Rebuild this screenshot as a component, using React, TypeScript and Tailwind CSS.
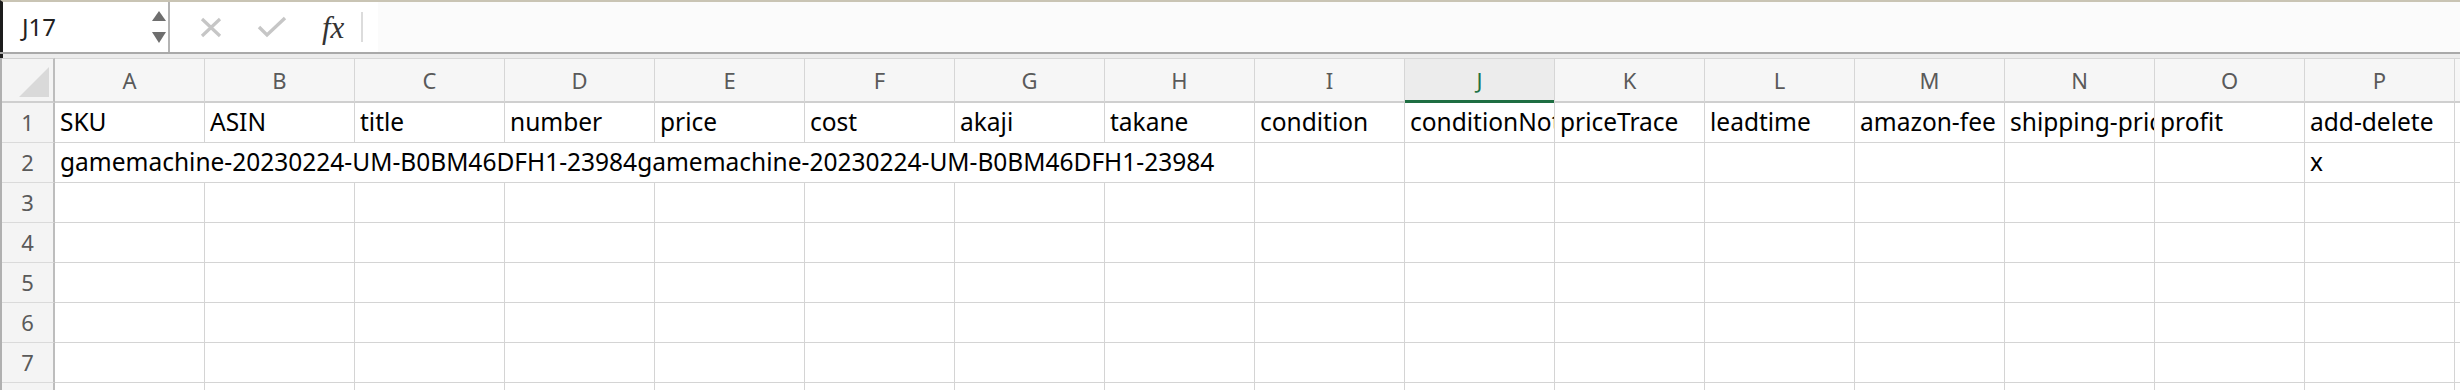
const COLS = ['A', 'B', 'C', 'D', 'E', 'F', 'G', 'H', 'I', 'J', 'K', 'L', 'M', 'N', 'O', 'P', 'Q'];

const HEAD = [
  'SKU', 'ASIN', 'title', 'number', 'price', 'cost', 'akaji', 'takane', 'condition',
  'conditionNote', 'priceTrace', 'leadtime', 'amazon-fee', 'shipping-price', 'profit', 'add-delete', '',
];

const SKU = 'gamemachine-20230224-UM-B0BM46DFH1-23984';

const font = { fontFamily: '"Noto Sans", "Noto Sans CJK JP", sans-serif' };

const FormulaBar = () => (
  <div className="flex h-[52px] border-t-2 border-[#c9c4b4] border-l-[3px] border-l-[#1c1c1c] bg-white">
    {/* Name box */}
    <div className="flex w-[167px] items-center justify-between border-r-2 border-[#b4b4b4] pl-[19px] pr-[2px]">
      <span className="text-[24px] text-[#222]">J17</span>
      <div className="flex h-full flex-col justify-between py-[9px]">
        <svg width="14" height="10" viewBox="0 0 14 10">
          <polygon points="7,0 14,10 0,10" fill="#6e6e6e" />
        </svg>
        <svg width="14" height="11" viewBox="0 0 14 11">
          <polygon points="0,0 14,0 7,11" fill="#6e6e6e" />
        </svg>
      </div>
    </div>

    {/* Cancel / enter / fx */}
    <div className="flex w-[208px] items-center">
      <svg className="ml-[30px]" width="22" height="21" viewBox="0 0 22 21">
        <path d="M2 2 L20 19 M20 2 L2 19" stroke="#c6c6c6" strokeWidth="3.2" strokeLinecap="butt" />
      </svg>
      <svg className="ml-[35px]" width="30" height="22" viewBox="0 0 30 22">
        <path d="M2 11 L10 19 L28 2" stroke="#c6c6c6" strokeWidth="3.4" fill="none" />
      </svg>
      <span
        className="ml-[35px] text-[31px] italic leading-none text-[#333]"
        style={{ fontFamily: '"Liberation Serif", "DejaVu Serif", serif' }}
      >
        fx
      </span>
      <div className="ml-[17px] h-[30px] w-[2px] bg-[#dcdcdc]" />
    </div>

    {/* Formula input */}
    <div className="flex-1 bg-[#fbfbfb]" />
  </div>
);

const App = () => {
  return (
    <div className="h-[390px] w-full overflow-hidden bg-white text-black" style={font}>
      <FormulaBar />
      <div className="h-[2px] bg-[#a9a9a9]" />
      <div className="h-[4px] border-l-[3px] border-[#1c1c1c] bg-[#ececec]" />

      <div className="grid w-[2603px] grid-cols-[53px_repeat(17,150px)] border-l-2 border-[#b0b0b0]">
        {/* Column headers */}
        <div className="relative h-[45px] border-t border-b-2 border-r-2 border-[#cfcfcf] border-r-[#bdbdbd] bg-[#f4f4f4]">
          <svg className="absolute right-[4px] bottom-[4px]" width="30" height="30" viewBox="0 0 30 30">
            <polygon points="30,0 30,30 0,30" fill="#d9d9d9" />
          </svg>
        </div>
        {COLS.map((c) => (
          <div
            key={c}
            className={`relative flex h-[45px] items-center justify-center border-t border-r border-b-2 border-[#d6d6d6] border-b-[#cfcfcf] text-[22px] ${
              c === 'J' ? 'bg-[#ececec] text-[#217346]' : 'bg-[#f6f6f6] text-[#5a5a5a]'
            }`}
          >
            {c}
            {c === 'J' && <div className="absolute left-0 right-0 -bottom-[2px] h-[3px] bg-[#1e6e42]" />}
          </div>
        ))}

        {/* Row 1 */}
        <div className="flex h-[40px] items-center justify-center border-r-2 border-b border-[#dadada] border-r-[#bdbdbd] bg-[#f4f4f4] text-[22px] text-[#5a5a5a]">
          1
        </div>
        {HEAD.map((h, i) => (
          <div
            key={i}
            className="flex h-[40px] items-center overflow-hidden whitespace-nowrap border-r border-b border-[#d4d4d4] pl-[5px] text-[24.5px]"
          >
            {h}
          </div>
        ))}

        {/* Row 2 */}
        <div className="flex h-[40px] items-center justify-center border-r-2 border-b border-[#dadada] border-r-[#bdbdbd] bg-[#f4f4f4] text-[22px] text-[#5a5a5a]">
          2
        </div>
        <div className="col-span-8 flex h-[40px] items-center whitespace-nowrap border-r border-b border-[#d4d4d4] pl-[5px] text-[24.5px]">
          {SKU}
          {SKU}
        </div>
        {COLS.slice(8).map((c) => (
          <div
            key={c}
            className="flex h-[40px] items-center border-r border-b border-[#d4d4d4] pl-[5px] text-[24.5px]"
          >
            {c === 'P' ? 'x' : ''}
          </div>
        ))}

        {/* Empty rows */}
        {[3, 4, 5, 6, 7, 8].map((r) => (
          <div key={r} className="contents">
            <div className="flex h-[40px] items-center justify-center border-r-2 border-b border-[#dadada] border-r-[#bdbdbd] bg-[#f4f4f4] text-[22px] text-[#5a5a5a]">
              {r}
            </div>
            {COLS.map((c) => (
              <div key={c} className="h-[40px] border-r border-b border-[#d4d4d4]" />
            ))}
          </div>
        ))}
      </div>
    </div>
  );
};

export default App;
